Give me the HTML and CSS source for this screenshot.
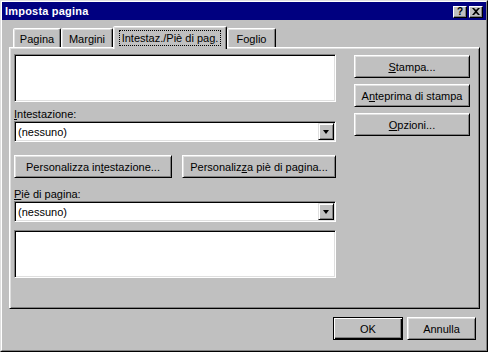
FILE: index.html
```html
<!DOCTYPE html>
<html>
  <head>
    <meta charset="utf-8">
    <title>Imposta pagina</title>
    <link rel="stylesheet" href="styles.css">
  </head>
  <body>
    <div class="window">
      <div class="titlebar">
        <span class="title">Imposta pagina</span>
        <div class="caption-buttons">
          <div class="caption-btn help">?</div>
          <div class="caption-btn">
            <svg width="8" height="7" viewBox="0 0 8 7">
              <path d="M0 0h2l2 2 2-2h2L5 3.5 8 7H6L4 5 2 7H0l3-3.5z" fill="#000"></path>
            </svg>
          </div>
        </div>
      </div>

      <div class="dialog">
        <div class="tabs">
          <div class="tab tab-pagina">Pagina</div>
          <div class="tab tab-margini">Margini</div>
          <div class="tab tab-active"><span class="focus">Intestaz./Piè di pag.</span></div>
          <div class="tab tab-foglio">Foglio</div>
        </div>

        <div class="panel">
          <div class="left">
            <div class="preview"></div>

            <div class="label label-first"><u>I</u>ntestazione:</div>
            <div class="combo">
              <span class="combo-text">(nessuno)</span>
              <div class="combo-arrow"><span class="triangle"></span></div>
            </div>

            <div class="custom-row">
              <div class="btn btn-header">Personalizza in<u>t</u>estazione...</div>
              <div class="btn btn-footer">Personaliz<u>z</u>a piè di pagina...</div>
            </div>

            <div class="label"><u>P</u>iè di pagina:</div>
            <div class="combo">
              <span class="combo-text">(nessuno)</span>
              <div class="combo-arrow"><span class="triangle"></span></div>
            </div>

            <div class="preview preview-footer"></div>
          </div>

          <div class="right">
            <div class="btn"><u>S</u>tampa...</div>
            <div class="btn">A<u>n</u>teprima di stampa</div>
            <div class="btn"><u>O</u>pzioni...</div>
          </div>
        </div>

        <div class="footer">
          <div class="btn btn-default">OK</div>
          <div class="btn btn-cancel">Annulla</div>
        </div>
      </div>
    </div>
  </body>
</html>
```

FILE: styles.css
```css
html, body {
  margin: 0;
  padding: 0;
  background: #ffffff;
}

body {
  font-family: "Liberation Sans", Arial, sans-serif;
  font-size: 11px;
  color: #000000;
}

u {
  text-decoration: underline;
  text-underline-offset: 1px;
}

.window {
  width: 488px;
  height: 352px;
  box-sizing: border-box;
  padding: 1px;
  background: #c0c0c0;
  border: 1px solid;
  border-color: #dfdfdf #000000 #000000 #dfdfdf;
  box-shadow: inset 1px 1px #ffffff, inset -1px -1px #808080;
  border-width: 1px;
  outline: none;
  position: relative;
}

.window::before {
  content: "";
  position: absolute;
  inset: 0;
  border: 1px solid;
  border-color: #ffffff #808080 #808080 #ffffff;
  pointer-events: none;
}

.titlebar {
  height: 18px;
  background: #000080;
  color: #ffffff;
  display: flex;
  align-items: center;
  justify-content: space-between;
  padding: 0 3px 0 3px;
}

.title {
  font-weight: bold;
  font-size: 11px;
  letter-spacing: 0.2px;
}

.caption-buttons {
  display: flex;
  gap: 2px;
  margin-top: 1px;
}

.caption-btn {
  width: 14px;
  height: 12px;
  box-sizing: border-box;
  background: #c0c0c0;
  border: 1px solid;
  border-color: #ffffff #000000 #000000 #ffffff;
  box-shadow: inset -1px -1px #808080;
  display: flex;
  align-items: center;
  justify-content: center;
  color: #000000;
}

.caption-btn.help {
  font-weight: bold;
  font-size: 10px;
  line-height: 10px;
}

.dialog {
  padding: 6px 0 0 7px;
}

/* tabs */
.tabs {
  display: flex;
  align-items: flex-end;
  height: 21px;
  padding-left: 4px;
  position: relative;
  z-index: 2;
}

.tab {
  height: 19px;
  box-sizing: border-box;
  border: 1px solid;
  border-bottom: none;
  border-color: #ffffff #000000 transparent #ffffff;
  border-radius: 2px 2px 0 0;
  box-shadow: inset -1px 0 #808080, inset 1px 1px #dfdfdf;
  display: flex;
  align-items: center;
  justify-content: center;
  background: #c0c0c0;
  padding-top: 1px;
}

.tab-pagina { width: 48px; }
.tab-margini { width: 52px; }
.tab-foglio { width: 49px; }

.tab-active {
  width: 114px;
  height: 23px;
  margin-bottom: -2px;
  padding-bottom: 2px;
}

.focus {
  outline: 1px dotted #000000;
  outline-offset: 1px;
  padding: 0 1px;
}

/* panel */
.panel {
  width: 471px;
  height: 262px;
  box-sizing: border-box;
  border: 1px solid;
  border-color: #ffffff #000000 #000000 #ffffff;
  box-shadow: inset 1px 1px #dfdfdf, inset -1px -1px #808080;
  padding: 6px 9px 0 4px;
  display: flex;
  gap: 18px;
}

.left {
  width: 322px;
  display: flex;
  flex-direction: column;
}

.right {
  width: 116px;
  display: flex;
  flex-direction: column;
  gap: 6px;
  padding-top: 1px;
}

.preview {
  height: 48px;
  box-sizing: border-box;
  background: #ffffff;
  border: 1px solid;
  border-color: #808080 #ffffff #ffffff #808080;
  box-shadow: inset 1px 1px #000000, inset -1px -1px #dfdfdf;
}

.preview-footer {
  margin-top: 8px;
}

.label {
  height: 13px;
  line-height: 13px;
  margin-top: 10px;
}

.label-first {
  margin-top: 6px;
}

.combo {
  height: 21px;
  box-sizing: border-box;
  background: #ffffff;
  border: 1px solid;
  border-color: #808080 #ffffff #ffffff #808080;
  box-shadow: inset 1px 1px #000000, inset -1px -1px #dfdfdf;
  display: flex;
  align-items: center;
  justify-content: space-between;
  padding: 1px 1px 1px 3px;
}

.combo-text {
  padding-top: 1px;
}

.combo-arrow {
  width: 16px;
  height: 17px;
  box-sizing: border-box;
  background: #c0c0c0;
  border: 1px solid;
  border-color: #dfdfdf #000000 #000000 #dfdfdf;
  box-shadow: inset 1px 1px #ffffff, inset -1px -1px #808080;
  display: flex;
  align-items: center;
  justify-content: center;
}

.triangle {
  width: 0;
  height: 0;
  border-left: 3.5px solid transparent;
  border-right: 3.5px solid transparent;
  border-top: 4px solid #000000;
}

.custom-row {
  display: flex;
  gap: 10px;
  margin-top: 13px;
}

.btn {
  height: 23px;
  box-sizing: border-box;
  background: #c0c0c0;
  border: 1px solid;
  border-color: #ffffff #000000 #000000 #ffffff;
  box-shadow: inset 1px 1px #dfdfdf, inset -1px -1px #808080;
  display: flex;
  align-items: center;
  justify-content: center;
  white-space: nowrap;
}

.btn-header { width: 158px; }
.btn-footer { width: 154px; }

/* footer */
.footer {
  width: 471px;
  display: flex;
  justify-content: flex-end;
  gap: 4px;
  margin-top: 8px;
  padding-right: 4px;
  box-sizing: border-box;
}

.btn-default {
  width: 70px;
  border-color: #000000;
  box-shadow: inset 1px 1px #ffffff, inset -1px -1px #000000, inset -2px -2px #808080;
}

.btn-cancel {
  width: 69px;
}
```
